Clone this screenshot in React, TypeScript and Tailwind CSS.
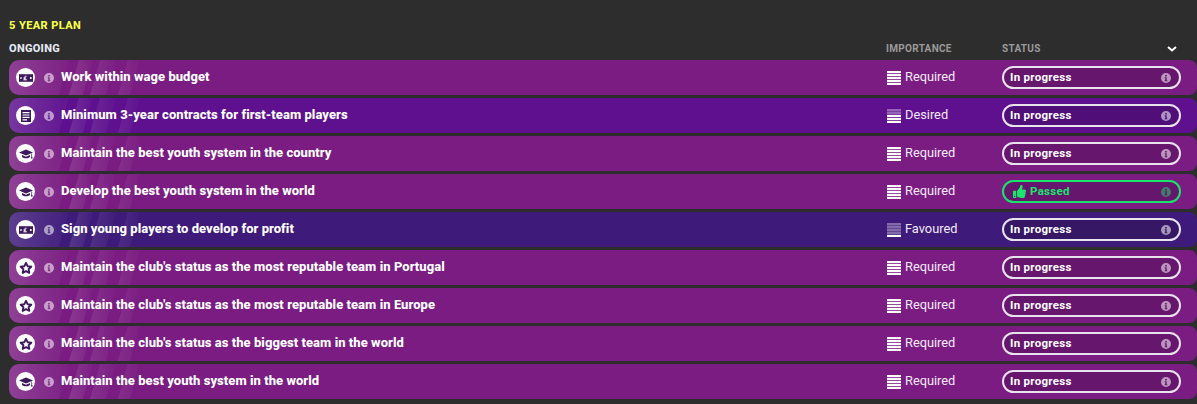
import { FaThumbsUp } from 'react-icons/fa'

type Importance = 'Required' | 'Desired' | 'Favoured'
type IconKind = 'money' | 'contract' | 'cap' | 'star'

const ROWS: { icon: IconKind; label: string; importance: Importance; passed?: boolean }[] = [
    { icon: 'money', label: 'Work within wage budget', importance: 'Required' },
    { icon: 'contract', label: 'Minimum 3-year contracts for first-team players', importance: 'Desired' },
    { icon: 'cap', label: 'Maintain the best youth system in the country', importance: 'Required' },
    { icon: 'cap', label: 'Develop the best youth system in the world', importance: 'Required', passed: true },
    { icon: 'money', label: 'Sign young players to develop for profit', importance: 'Favoured' },
    { icon: 'star', label: "Maintain the club's status as the most reputable team in Portugal", importance: 'Required' },
    { icon: 'star', label: "Maintain the club's status as the most reputable team in Europe", importance: 'Required' },
    { icon: 'star', label: "Maintain the club's status as the biggest team in the world", importance: 'Required' },
    { icon: 'cap', label: 'Maintain the best youth system in the world', importance: 'Required' },
]

const ROW_BG: Record<Importance, string> = {
    Required: 'bg-[#7a1c82]',
    Desired: 'bg-[#5e108e]',
    Favoured: 'bg-[#3e1a7a]',
}

const PILL_BG: Record<Importance, string> = {
    Required: 'bg-[#66166d]',
    Desired: 'bg-[#500e78]',
    Favoured: 'bg-[#351766]',
}

const SOLID_BARS: Record<Importance, number> = { Required: 5, Desired: 3, Favoured: 1 }

const InfoIcon = ({ className }: { className?: string }) => (
    <svg viewBox="0 0 10 10" className={className}>
        <path
            fillRule="evenodd"
            fill="currentColor"
            d="M5 0a5 5 0 1 1 0 10A5 5 0 0 1 5 0ZM4.2 2v1.4h1.6V2ZM3.7 4.2v1h.6v2h-.6v1h2.6v-1h-.6V4.2Z"
        />
    </svg>
)

const GoalIcon = ({ kind }: { kind: IconKind }) => (
    <div className="flex h-[19px] w-[19px] shrink-0 items-center justify-center rounded-full bg-white">
        <svg viewBox="0 0 14 14" className="h-[14px] w-[14px] text-[#3d1a5e]">
            {kind === 'money' && (
                <>
                    <rect x="0" y="3.2" width="14" height="7.6" fill="currentColor" />
                    <path d="M7.6 5.2C6.6 4.8 5.8 5.3 5.8 6.4V8.6M4.4 7H7M4.4 8.8H7.8" fill="none" stroke="#fff" strokeWidth="1" />
                    <rect x="11" y="6" width="1.6" height="2" fill="#fff" />
                    <rect x="1.4" y="6" width="1.2" height="2" fill="#fff" />
                </>
            )}
            {kind === 'contract' && (
                <path
                    fillRule="evenodd"
                    fill="currentColor"
                    d="M2 1h10v12H2ZM3.5 3v1.2h7V3ZM3.5 5.4v1.2h7V5.4ZM3.5 7.8V9h7V7.8ZM3.5 10.2v1.2h4.5v-1.2Z"
                />
            )}
            {kind === 'cap' && (
                <>
                    <path fill="currentColor" d="M7 2.6 14 5.6 7 8.4 0 5.6Z" />
                    <path fill="currentColor" d="M3 8.1 7 9.7l4-1.6v1.9c-1 .9-2.4 1.3-4 1.3s-3-.4-4-1.3Z" />
                    <path fill="currentColor" d="M12.4 6.6h.7v3.6h.5v1.4h-1.7v-1.4h.5Z" />
                </>
            )}
            {kind === 'star' && (
                <path
                    fill="none"
                    stroke="currentColor"
                    strokeWidth="1.9"
                    strokeLinejoin="round"
                    d="M7 1.8 8.6 5.2 12.3 5.7 9.6 8.2 10.3 11.9 7 10.1 3.7 11.9 4.4 8.2 1.7 5.7 5.4 5.2Z"
                />
            )}
        </svg>
    </div>
)

const ImportanceBars = ({ level }: { level: Importance }) => (
    <div className="flex w-[14px] flex-col gap-px bg-white/20">
        {[0, 1, 2, 3, 4].map((bar) => (
            <div
                key={bar}
                className={`h-[2px] ${5 - bar <= SOLID_BARS[level] ? 'bg-white' : 'bg-white/20'}`}
            />
        ))}
    </div>
)

// the lighter slanted bands at the left end of every row
const RowSheen = () => (
    <svg
        viewBox="0 0 160 35"
        preserveAspectRatio="none"
        className="pointer-events-none absolute left-0 top-0 h-full w-[160px]"
    >
        <defs>
            <linearGradient id="sheen" x1="0" x2="1" y1="0" y2="0">
                <stop offset="0" stopColor="#fff" stopOpacity="0.16" />
                <stop offset="1" stopColor="#fff" stopOpacity="0.02" />
            </linearGradient>
        </defs>
        <path fill="url(#sheen)" d="M0 0H60L50 35H0Z" />
        <path fill="url(#sheen)" d="M70 0H84L74 35H60Z" opacity="0.8" />
        <path fill="url(#sheen)" d="M91 0H107L97 35H81Z" opacity="0.6" />
        <path fill="url(#sheen)" d="M119 0H131L121 35H109Z" opacity="0.5" />
    </svg>
)

const StatusPill = ({ level, passed }: { level: Importance; passed?: boolean }) => (
    <div
        className={`flex h-[23px] w-[179px] items-center rounded-full border-2 pl-[6px] pr-[8px] ${PILL_BG[level]} ${
            passed ? 'border-[#19e56b] text-[#19e56b]' : 'border-[#e9e3ee] text-white'
        }`}
    >
        {passed && <FaThumbsUp className="ml-[3px] mr-[4px] h-[13px] w-[13px]" />}
        <span className="flex-1 text-[11.5px] font-bold leading-[15px] tracking-[0.3px]">
            {passed ? 'Passed' : 'In progress'}
        </span>
        <InfoIcon className={`h-[10px] w-[10px] ${passed ? 'text-[#19e56b]/50' : 'text-white/55'}`} />
    </div>
)

export default function App() {
    return (
        <div className="flex h-[404px] w-[1197px] flex-col overflow-hidden bg-[#2d2d2d] font-['Roboto',sans-serif]">
            <h1 className="ml-[9px] mt-[19px] text-[11px] font-extrabold leading-[14px] tracking-[0.4px] text-[#f8ff4a]">
                5 YEAR PLAN
            </h1>
            <div className="mt-[9px] flex h-[14px] items-center text-[11px] font-extrabold leading-[14px] tracking-[0.3px]">
                <span className="ml-[9px] flex-1 text-[#e6e8f2]">ONGOING</span>
                <span className="w-[116px] text-[10px] font-bold tracking-[0.3px] text-[#9a9a9a]">IMPORTANCE</span>
                <span className="w-[165px] text-[10px] font-bold tracking-[0.3px] text-[#9a9a9a]">STATUS</span>
                <svg viewBox="0 0 10 6" className="mr-[20px] h-[6px] w-[10px] text-white">
                    <path d="M1 1l4 3.5L9 1" fill="none" stroke="currentColor" strokeWidth="2" />
                </svg>
            </div>
            <div className="ml-[9px] mt-[4px] flex flex-col gap-[3px]">
                {ROWS.map((row) => (
                    <div
                        key={row.label}
                        className={`relative flex h-[35px] items-center overflow-hidden rounded-l-[10px] rounded-r-[8px] pl-[7px] pr-[16px] ${ROW_BG[row.importance]}`}
                    >
                        <RowSheen />
                        <div className="relative flex flex-1 items-center">
                            <GoalIcon kind={row.icon} />
                            <InfoIcon className="ml-[9px] h-[10px] w-[10px] text-white/55" />
                            <span className="ml-[7px] pb-[2px] text-[13px] font-extrabold tracking-[0.05px] text-white">
                                {row.label}
                            </span>
                        </div>
                        <div className="relative flex w-[116px] items-center gap-[4px] pl-px">
                            <ImportanceBars level={row.importance} />
                            <span className="pb-[2px] text-[12.8px] text-[#f2eaf5]">{row.importance}</span>
                        </div>
                        <StatusPill level={row.importance} passed={row.passed} />
                    </div>
                ))}
            </div>
        </div>
    )
}
